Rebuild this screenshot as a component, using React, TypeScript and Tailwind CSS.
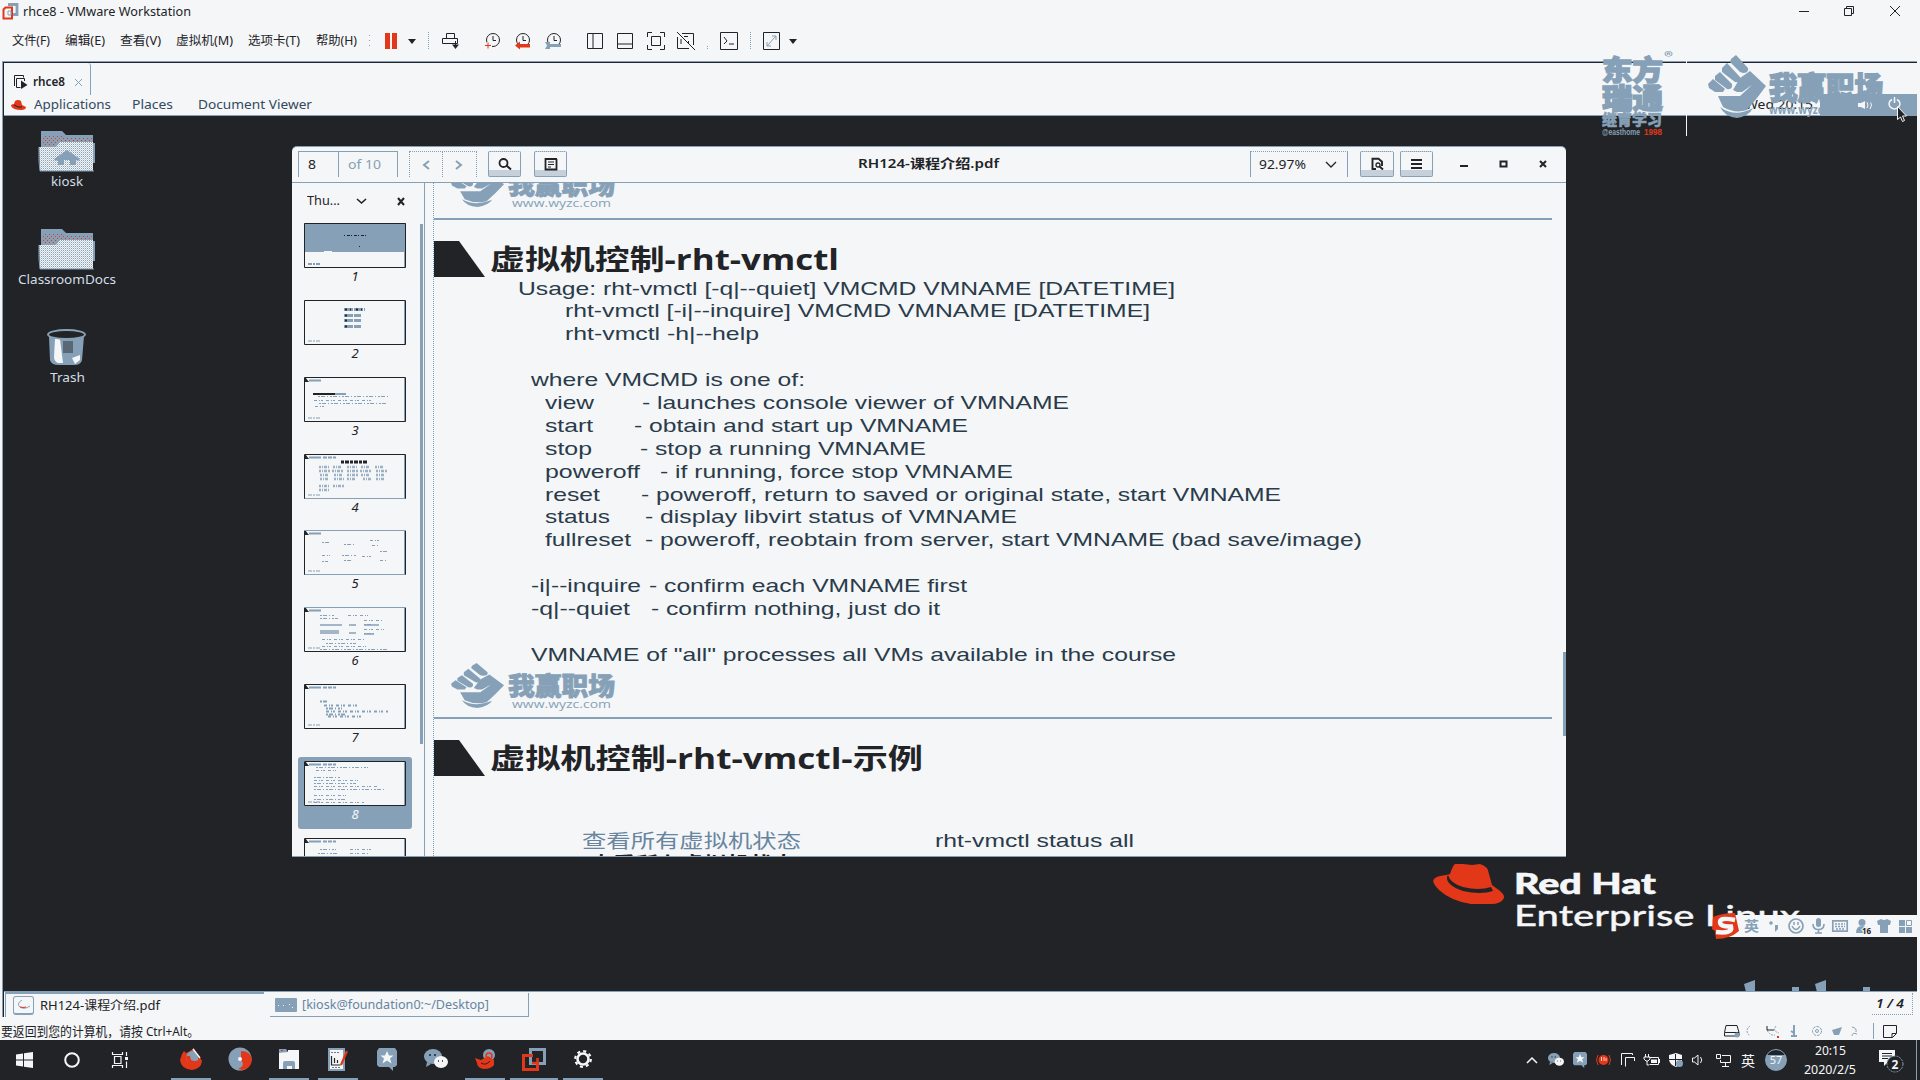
import { useLayoutEffect, useRef } from "react";
import type { ReactNode } from "react";

const INK = "#222326";
const PAPER = "#f4f6f8";
const STEEL = "#86a1b7";
const RED = "#e3371a";

/** Text stretched horizontally so that it is exactly w pixels wide. */
function Fit({ w, x = 0, className = "", children }: { w: number; x?: number; className?: string; children: ReactNode }) {
  const ref = useRef<HTMLSpanElement>(null);
  useLayoutEffect(() => {
    const el = ref.current;
    if (!el) return;
    const fit = () => {
      el.style.transform = "none";
      el.style.transform = `scaleX(${w / el.getBoundingClientRect().width})`;
    };
    fit();
    document.fonts?.ready.then(fit);
  }, [w]);
  return (
    <span className={`inline-flex shrink-0 ${className}`} style={{ width: w, marginLeft: x }}>
      <span ref={ref} className="inline-block shrink-0 origin-left whitespace-pre">
        {children}
      </span>
    </span>
  );
}

/** Icon canvas with one unit per pixel. */
function Ico({ w, h, x = 0, className = "", children }: { w: number; h: number; x?: number; className?: string; children: ReactNode }) {
  return (
    <svg width={w} height={h} viewBox={`0 0 ${w} ${h}`} fill="none" className={`block shrink-0 overflow-visible ${className}`} style={{ marginLeft: x }}>
      {children}
    </svg>
  );
}

function Fist({ w, h, x = 0, className = "" }: { w: number; h: number; x?: number; className?: string }) {
  return (
    <svg width={w} height={h} viewBox="0 0 58 63" preserveAspectRatio="none" className={`block shrink-0 ${className}`} style={{ marginLeft: x }} fill={STEEL}>
      <path d="M23 4 28 0 40 13Q41 18 35 18L32 17 22 7Z" />
      <path d="M14 13 19 8 32 22Q33 28 27 27L14 17Z" />
      <path d="M7 21 12 17 24 29Q25 35 19 34L7 25Z" />
      <path d="M0 29 5 24 17 34 15 37H7L1 33Z" />
      <path d="M32 23 42 16 58 31 49 43 39 55Q27 59 15 52L10 41H32L44 30 34 37H29L25 35Z" />
      <path d="M12 52Q27 63 45 53 41 61 29 63 17 62 12 52Z" />
    </svg>
  );
}

/* ------------------------------------------------------------ host window */

function TitleBar() {
  return (
    <header className="flex h-6 items-center pl-[2px] text-[12px] text-[#222326]">
      <Ico w={16} h={17} className="mt-[-2px]">
        <path d="M6 1.500h9v10h-4" stroke={STEEL} strokeWidth="2.800" />
        <path d="M3.500 4.500h6.500v11H1.500v-9z" stroke={RED} strokeWidth="2" />
        <path d="M6 8h3v4h-3z" stroke={STEEL} />
      </Ico>
      <Fit w={168} x={5}>rhce8 - VMware Workstation</Fit>
      <Ico w={102} h={12} x={1608} className="mt-[-3px]">
        <path d="M0 6.500h10" stroke={INK} />
        <path d="M45.500 3.500h7v7h-7zM47.500 3.500v-2h7v7h-2" stroke={INK} />
        <path d="M91 1l10 10M101 1L91 11" stroke={INK} />
      </Ico>
    </header>
  );
}

function Caret({ x }: { x: number }) {
  return (
    <Ico w={8} h={5} x={x}>
      <path d="M0 0h8L4 5z" fill={INK} />
    </Ico>
  );
}

function Clock({ x, children }: { x: number; children: ReactNode }) {
  return (
    <Ico w={17} h={18} x={x}>
      <circle cx="9" cy="8" r="6.500" stroke={INK} />
      <path d="M9 4v4.500h3" stroke={INK} />
      {children}
    </Ico>
  );
}

function Dots({ x, h = 18 }: { x: number; h?: number }) {
  return (
    <Ico w={1} h={h} x={x}>
      <path d={`M.5 0v${h}`} stroke={STEEL} strokeDasharray="1 1" />
    </Ico>
  );
}

function MenuBar() {
  return (
    <nav className="flex h-[37px] items-center pb-[3px] text-[12px] text-[#222326]">
      <Fit w={38} x={12}>文件(F)</Fit>
      <Fit w={40} x={15}>编辑(E)</Fit>
      <Fit w={41} x={15}>查看(V)</Fit>
      <Fit w={57} x={15}>虚拟机(M)</Fit>
      <Fit w={52} x={15}>选项卡(T)</Fit>
      <Fit w={41} x={16}>帮助(H)</Fit>
      <Ico w={1} h={12} x={12}><path d="M.5 0v12" stroke={STEEL} strokeDasharray="1 4" /></Ico>
      <Ico w={12} h={16} x={15}><path d="M0 0h5v16H0zM7 0h5v16H7z" fill={RED} /></Ico>
      <Caret x={11} />
      <Dots x={12} />
      <Ico w={18} h={18} x={13}>
        <path d="M4.500 1.500h8v5h-8zM.5 6.500h15v5H.500zM13.500 9v6" stroke={INK} />
        <path d="M10 12.500h7L13.500 17z" fill={INK} />
      </Ico>
      <Clock x={24}><path d="M0 14h8M4 10v8" stroke={PAPER} strokeWidth="3" /><path d="M1 13.500h6M4 10.500v6" stroke={RED} /></Clock>
      <Clock x={13}><path d="M1 13.500 6 9.500v2.500h10v3.500H6v2z" fill={RED} /></Clock>
      <Clock x={14}><path d="M0 10h5v2h11v3H5v2H0l2-3.500z" fill={STEEL} /></Clock>
      <Ico w={16} h={18} x={25}><path d="M.5 1.500h15v15H.5zM6 2v14" stroke={INK} /></Ico>
      <Ico w={16} h={18} x={14}><path d="M.5 1.500h15v15H.5zM1 12h14" stroke={INK} /></Ico>
      <Ico w={18} h={18} x={14}><path d="M.5 5V.5H5M13 .5h4.500V5M17.500 13v4.500H13M5 17.500H.500V13M4.500 4.500h9v9h-9z" stroke={INK} /></Ico>
      <Ico w={18} h={18} x={12}><path d="M5 1.500h11.500V13M12 16.500H.500V5M7 4.500h4M11.500 9v3M0 0l18 18M4 12v-5" stroke={INK} /></Ico>
      <Ico w={1} h={18} x={12}><path d="M.5 14v4" stroke={STEEL} strokeDasharray="1 1" /></Ico>
      <Ico w={18} h={18} x={12}><path d="M.5.5h17v17H.500zM4 5l3 4-3 3M9 12h5" stroke={INK} /></Ico>
      <Dots x={12} />
      <Ico w={17} h={18} x={12}>
        <path d="M.5.5h16v17H.500z" stroke={INK} />
        <path d="M4 14 13 4M9 4h4v4M4 10v4h4" stroke={STEEL} />
      </Ico>
      <Caret x={9} />
    </nav>
  );
}

function TabStrip() {
  return (
    <div className="flex h-8 items-center">
      <div className="flex h-full w-[87px] items-center border-r border-[#86a1b7] pl-[10px] pt-[6px] [border-top-right-radius:3px]">
        <Ico w={14} h={14}>
          <path d="M.5 11V.500h9v2M10.500 6V3.500h-8v9h4" stroke={INK} />
          <path d="M7 5.500 13.500 10 7 14z" fill={INK} />
        </Ico>
        <Fit w={32} x={5} className="text-[12px] font-semibold text-[#222326]">rhce8</Fit>
        <Ico w={7} h={7} x={10}><path d="M0 0l7 7M7 0L0 7" stroke={STEEL} /></Ico>
      </div>
    </div>
  );
}

/* -------------------------------------------------------- guest top panel */

function GuestPanel() {
  return (
    <div className="relative flex h-[21px] items-center border-b border-[#86a1b7] pl-[7px] text-[12.500px] text-[#33495c]">
      <Ico w={15} h={10}>
        <path d="M4 1Q7-1 10 1l1 4 4 2q0 3-5 3Q2 10 0 6q0-2 3-2z" fill={RED} />
        <path d="M3 5q4 3 8 2" stroke={INK} />
      </Ico>
      <Fit w={77} x={8}>Applications</Fit>
      <Fit w={41} x={21}>Places</Fit>
      <Fit w={114} x={25}>Document Viewer</Fit>
      <div className="ml-auto flex h-full items-center">
        <Fit w={68} className="mr-[7px] text-[13px] text-[#222326]">Wed 20:15</Fit>
        <div className="flex h-[22px] w-[97px] items-center bg-[#86a1b7] pl-[38px]">
          <Ico w={15} h={8}>
            <path d="M0 2h3l4-2v8L3 6H0z" fill={PAPER} />
            <path d="M9 1q2 3 0 6M12 0q3 4 0 8" stroke={PAPER} />
          </Ico>
          <Ico w={13} h={13} x={15} className="mt-[-3px]">
            <path d="M4 2.500a5.500 5 0 1 0 5 0M6.500 0v6" stroke={PAPER} strokeWidth="1.500" />
          </Ico>
        </div>
      </div>
    </div>
  );
}

/* ---------------------------------------------------------- desktop icons */

function Folder({ home }: { home?: boolean }) {
  return (
    <Ico w={56} h={42}>
      <defs>
        <pattern id="weave" width="2" height="2" patternUnits="userSpaceOnUse">
          <rect width="2" height="2" fill={PAPER} />
          <rect width="1" height="1" fill={STEEL} />
          <rect x="1" y="1" width="1" height="1" fill="#c4d0db" />
        </pattern>
        <pattern id="specks" width="4" height="4" patternUnits="userSpaceOnUse">
          <rect width="4" height="4" fill={STEEL} />
          <rect width="1" height="1" fill={RED} />
          <rect x="2" y="2" width="1" height="1" fill={RED} />
        </pattern>
      </defs>
      <path d="M2 1h21l4 4h27v8h2v20h-2v8H2z" fill={STEEL} />
      <path d="M4 6h20l3 2h26v4H20l-5 4H4z" fill="url(#specks)" />
      <path d="M0 17h17l4-5h33v29H1z" fill="url(#weave)" />
      <path d="M0 17v14l1 10h54" stroke={STEEL} />
      {home && (
        <path d="M15 29 28 20l13 9-2 2-2-1v5h-6v-5h-6v5h-6v-5l-3 1z" fill={STEEL} />
      )}
    </Ico>
  );
}

function TrashCan() {
  return (
    <Ico w={40} h={37}>
      <path d="M2 7h35l-2 24q-1 5-8 5H12q-8 0-9-5z" fill={STEEL} />
      <path d="M8 10h5l3 24h-5q-4-2-4-6z" fill={PAPER} />
      <path d="M25 29l8-3v5l-5 4z" fill={PAPER} />
      <path d="M16 12h10v12H16z" fill={INK} opacity=".45" />
      <ellipse cx="19.500" cy="5.500" rx="18.500" ry="4.500" fill={INK} stroke={STEEL} strokeWidth="1.800" />
    </Ico>
  );
}

function DesktopIcon({ w, label, children }: { w: number; label: string; children: ReactNode }) {
  return (
    <div className="flex h-[98px] w-[128px] flex-col items-center">
      <div className="flex h-[42px] items-start">{children}</div>
      <Fit w={w} className="text-[13px] leading-[18px] text-[#d3dde6]">{label}</Fit>
    </div>
  );
}

/* ------------------------------------------------------ document viewer */

function ToolButton({ x, w = 33, children }: { x: number; w?: number; children: ReactNode }) {
  return (
    <div
      className="flex h-[26px] shrink-0 items-center justify-center rounded-[2px] border border-[#86a1b7] bg-[linear-gradient(#f4f6f8_75%,#c5d0da_75%)] [border-top-style:dotted]"
      style={{ width: w, marginLeft: x }}
    >
      {children}
    </div>
  );
}

function Toolbar() {
  return (
    <div className="flex h-[36px] shrink-0 items-center border-b border-[#86a1b7] pb-px pl-[6px]">
      <div className="flex h-[26px] w-[100px] items-center border-x border-t border-[#86a1b7] text-[13px]">
        <Fit w={8} x={9} className="text-[#222326]">8</Fit>
        <div className="ml-[22px] h-full w-px bg-[#86a1b7]" />
        <Fit w={33} x={9} className="text-[#86a1b7]">of 10</Fit>
      </div>
      <div className="ml-[11px] flex h-[26px] w-[68px] items-center border border-b-0 border-dotted border-[#86a1b7]">
        <Ico w={7} h={10} x={13}><path d="M6 1 1 5l5 4" stroke={STEEL} strokeWidth="2" /></Ico>
        <div className="ml-[12px] h-full w-px border-l border-dotted border-[#86a1b7]" />
        <Ico w={7} h={10} x={12}><path d="M1 1l5 4-5 4" stroke={STEEL} strokeWidth="2" /></Ico>
      </div>
      <ToolButton x={11}>
        <Ico w={14} h={12}><circle cx="5.500" cy="5" r="4" stroke={INK} strokeWidth="1.800" /><path d="M8.500 7.500 13 11.500" stroke={INK} strokeWidth="2" /></Ico>
      </ToolButton>
      <ToolButton x={13}>
        <Ico w={14} h={12}><path d="M1.500 0v11.500h11V1" stroke={INK} strokeWidth="1.800" /><path d="M2 1h11" stroke={INK} strokeWidth="2" /><path d="M4 4h6M4 6.500h6M4 9h3" stroke={INK} /></Ico>
      </ToolButton>
      <Fit w={141} x={291} className="text-[13px] font-semibold text-[#222326]">RH124-课程介绍.pdf</Fit>
      <div className="ml-[251px] flex h-[26px] w-[98px] items-center border-x border-t border-[#86a1b7] [border-top-style:dotted]">
        <Fit w={47} x={8} className="text-[13px] text-[#222326]">92.97%</Fit>
        <Ico w={12} h={7} x={19}><path d="M1 1l5 5 5-5" stroke={INK} strokeWidth="1.300" /></Ico>
      </div>
      <ToolButton x={12} w={34}>
        <Ico w={13} h={12}><path d="M5 11H1.500V.700h6l3.500 3V8" stroke={INK} strokeWidth="1.900" /><circle cx="7" cy="7" r="2" stroke={INK} strokeWidth="1.300" /><path d="M8.500 8.500l3.500 3" stroke={INK} strokeWidth="2" /></Ico>
      </ToolButton>
      <ToolButton x={6}>
        <Ico w={11} h={10}><path d="M0 1h11M0 5h11M0 9h11" stroke={INK} strokeWidth="1.800" /></Ico>
      </ToolButton>
      <Ico w={88} h={10} x={27}>
        <path d="M0 7h8" stroke={INK} strokeWidth="2" />
        <path d="M40.500 2.500h6v5h-6z" stroke={INK} strokeWidth="2" />
        <path d="M80 2l6 6M86 2l-6 6" stroke={INK} strokeWidth="2" />
      </Ico>
    </div>
  );
}

type Dash = [number, number, number];

const thumbs: Dash[][] = [
  [],
  [[40, 9, 21], [40, 15, 17], [40, 20, 17], [40, 26, 17]],
  [[14, 19, 72], [10, 23, 60], [15, 26, 68], [11, 29, 12]],
  [],
  [[18, 12, 8], [66, 10, 10], [40, 14, 10], [68, 15, 6], [76, 21, 8], [18, 25, 8], [38, 25, 14], [58, 26, 12], [18, 31, 6], [76, 30, 6], [40, 30, 8]],
  [[16, 8, 14], [44, 8, 20], [16, 11, 18], [60, 13, 18], [60, 17, 8], [60, 22, 20], [60, 26, 10], [18, 32, 42], [22, 36, 30], [18, 39, 44], [16, 42, 68]],
  [[16, 17, 8], [20, 21, 36], [22, 24, 16], [22, 27, 62], [22, 30, 20], [24, 32, 34]],
  [[12, 6, 52], [12, 9, 20], [10, 16, 26], [10, 19, 44], [10, 22, 42], [10, 25, 64], [10, 28, 70], [10, 34, 32], [10, 38, 32], [10, 41, 50]],
  [[16, 11, 16], [46, 11, 24], [14, 15, 20], [46, 15, 18], [14, 19, 26]],
];

function Thumb({ page, dashes }: { page: number; dashes: Dash[] }) {
  const selected = page === 8;
  return (
    <div className="ml-[6px] flex h-[76.850px] w-[114px] shrink-0 flex-col items-center pt-[4px]">
      <div className={`flex h-[72px] w-full flex-col items-center rounded-[3px] pt-1 ${selected ? "bg-[#86a1b7]" : ""}`}>
        <Ico w={102} h={45} className="bg-[#f4f6f8]">
          {page === 1 && (
            <>
              <path d="M0 0h102v29H0z" fill={STEEL} />
              <path d="M40 12.500h22M55 23.500h1" stroke={INK} strokeDasharray="1 2 3 1" />
              <path d="M20 28.500h8" stroke={PAPER} />
            </>
          )}
          {page === 3 && <path d="M9 17h22" stroke={INK} strokeWidth="2" />}
          {page === 3 && <path d="M31 17h11" stroke={STEEL} strokeWidth="2" />}
          {page === 4 && <path d="M37 8h27" stroke={INK} strokeWidth="3" strokeDasharray="3 1 4 1" />}
          {page === 4 && (
            <path
              d="M15 13h10M29 13h9M43 13h10M57 13h8M71 13h9M15 17h11M28 17h12M43 17h11M56 17h11M72 17h11M16 21h9M30 21h8M43 21h11M57 21h8M72 21h9M16 25h9M30 25h10M43 25h9M59 25h8M72 25h9M15 32h10M29 32h12M15 36h10"
              stroke={STEEL}
              strokeWidth="2.500"
              strokeDasharray="2 1 1 1 3 1"
              opacity=".8"
            />
          )}
          {page === 6 && <path d="M16 18h22M16 24h19M45 18h7M60 18h15M16 26h19M45 26h7M60 27h10" stroke={STEEL} strokeWidth="1.500" />}
          {dashes.map(([x, y, w], i) => (
            <path key={i} d={`M${x} ${y + 0.5}h${w}`} stroke={STEEL} strokeWidth={page === 2 ? 3 : page === 7 ? 2 : 1} strokeDasharray={page === 2 ? "9 1" : i % 2 ? "3 2 1 1 2 3" : "2 1 4 2 1 2"} />
          ))}
          {page === 2 && <path d="M41 9.500h20M41 15.500h3M41 20.500h3M41 26.500h3" stroke={INK} strokeWidth="2" strokeDasharray="2 3 1 5" />}
          {page > 2 && <path d="M1 0v5h4z" fill={INK} />}
          {page > 2 && <path d="M5 3.500h12" stroke={STEEL} strokeWidth="2" />}
          {(page === 4 || page > 6) && <path d="M19 3.500h13" stroke={STEEL} strokeWidth="2" strokeDasharray="4 1" />}
          <path d="M4 41h12" stroke={STEEL} strokeWidth={page === 1 ? 2 : 1} strokeDasharray="4 1 2 1" />
          <path d="M.5.5h101v44H.5z" stroke={INK} />
          <path d="M100.500 1v43" stroke={STEEL} />
          {(page === 5 || page === 6) && <path d="M0 .5h102" stroke={STEEL} />}
          {(page === 4 || page === 5) && <path d="M1 44.500h100" stroke={STEEL} />}
        </Ico>
        {page < 9 && (
          <span className={`text-[13px] italic leading-[16px] ${selected ? "text-[#f4f6f8]" : "text-[#222326]"}`}>{page}</span>
        )}
      </div>
    </div>
  );
}

function Sidebar() {
  return (
    <aside className="flex w-[128px] shrink-0 flex-col overflow-hidden">
      <div className="flex h-[36px] shrink-0 items-center">
        <Fit w={33} x={15} className="text-[13px] text-[#222326]">Thu...</Fit>
        <Ico w={11} h={6} x={16}><path d="M1 1l4.500 4L10 1" stroke={INK} strokeWidth="1.600" /></Ico>
        <Ico w={8} h={7} x={30}><path d="M1 0l6 7M7 0L1 7" stroke={INK} strokeWidth="2" /></Ico>
      </div>
      <div className="mt-[-4px] flex min-h-0 grow flex-col overflow-hidden">
        {thumbs.map((d, i) => (
          <Thumb key={i} page={i + 1} dashes={d} />
        ))}
      </div>
    </aside>
  );
}

const VMCTL: [number, number, string, number, number, string][] = [
  [518, 657, "Usage: rht-vmctl [-q|--quiet] VMCMD VMNAME [DATETIME]", 0, 0, ""],
  [565, 585, "rht-vmctl [-i|--inquire] VMCMD VMNAME [DATETIME]", 0, 0, ""],
  [565, 194, "rht-vmctl -h|--help", 0, 0, ""],
  [0, 0, "", 0, 0, ""],
  [531, 274, "where VMCMD is one of:", 0, 0, ""],
  [545, 49, "view", 642, 427, "- launches console viewer of VMNAME"],
  [545, 48, "start", 634, 334, "- obtain and start up VMNAME"],
  [545, 47, "stop", 640, 286, "- stop a running VMNAME"],
  [545, 95, "poweroff", 660, 353, "- if running, force stop VMNAME"],
  [545, 55, "reset", 641, 640, "- poweroff, return to saved or original state, start VMNAME"],
  [545, 65, "status", 645, 372, "- display libvirt status of VMNAME"],
  [545, 86, "fullreset", 645, 717, "- poweroff, reobtain from server, start VMNAME (bad save/image)"],
  [0, 0, "", 0, 0, ""],
  [531, 110, "-i|--inquire", 649, 318, "- confirm each VMNAME first"],
  [531, 99, "-q|--quiet", 651, 289, "- confirm nothing, just do it"],
  [0, 0, "", 0, 0, ""],
  [531, 645, 'VMNAME of "all" processes all VMs available in the course', 0, 0, ""],
];

function SlideTitle({ w, children }: { w: number; children: ReactNode }) {
  return (
    <div className="flex h-[36px] items-center">
      <Ico w={51} h={36}><path d="M0 0h25l26 36H0z" fill={INK} /></Ico>
      <Fit w={w} x={5} className="text-[28px] font-bold leading-[36px] text-[#222326]">{children}</Fit>
    </div>
  );
}

function WyzcLogo() {
  return (
    <div className="flex">
      <Fist w={53} h={45} />
      <div className="ml-[4px] mt-[10px] flex flex-col">
        <Fit w={107} className="text-[25px] font-black leading-[25px] text-[#86a1b7] [-webkit-text-stroke:0.800px_#86a1b7]">我赢职场</Fit>
        <Fit w={99} x={4} className="text-[11px] leading-[11px] text-[#86a1b7]">www.wyzc.com</Fit>
      </div>
    </div>
  );
}

function Slides() {
  return (
    <main className="flex min-w-0 grow flex-col overflow-hidden border-l border-dotted border-[#86a1b7] [font-family:'Open_Sans','Noto_Sans_CJK_SC',sans-serif]">
      <section className="mr-[14px] flex h-[37px] shrink-0 flex-col justify-end border-b-2 border-[#86a1b7] pb-[10px] pl-[17px]">
        <WyzcLogo />
      </section>
      <section className="mr-[14px] mt-[21px] flex h-[478px] shrink-0 flex-col border-b-2 border-[#86a1b7]">
        <SlideTitle w={349}>虚拟机控制-rht-vmctl</SlideTitle>
        <div className="mt-[0.500px] flex h-[390px] shrink-0 flex-col font-['Liberation_Sans'] text-[18.500px] leading-[22.900px] text-[#2a3b4a]">
          {VMCTL.map(([x, w, a, x2, w2, b], i) => (
            <div key={i} className="flex h-[22.900px] shrink-0 items-center">
              {a && <Fit w={w} x={x - 434}>{a}</Fit>}
              {b && <Fit w={w2} x={x2 - x - w}>{b}</Fit>}
            </div>
          ))}
        </div>
        <div className="mt-[-5px] pl-[17px]"><WyzcLogo /></div>
      </section>
      <section className="mt-[21px] flex shrink-0 flex-col">
        <SlideTitle w={433}>虚拟机控制-rht-vmctl-示例</SlideTitle>
        <div className="mt-[53px] flex h-[24px] items-center">
          <Fit w={219} x={148} className="text-[19px] font-normal leading-[24px] text-[#6885a0]">查看所有虚拟机状态</Fit>
          <Fit w={199} x={134} className="font-['Liberation_Sans'] text-[18.500px] text-[#2a3b4a]">rht-vmctl status all</Fit>
        </div>
        <Fit w={205} x={156} className="text-[19px] font-bold leading-[22px] text-[#222326]">查看所有虚拟机状态</Fit>
      </section>
    </main>
  );
}

function DocumentViewer() {
  return (
    <div className="absolute left-[292px] top-[30px] flex h-[711px] w-[1274px] flex-col overflow-hidden rounded-t-[5px] border-b border-t border-[#86a1b7] bg-[#f4f6f8]">
      <Toolbar />
      <div className="flex min-h-0 grow">
        <Sidebar />
        <div className="mt-[41px] h-[520px] w-[3px] shrink-0 bg-[#86a1b7]" />
        <div className="ml-px mr-[8px] w-px shrink-0 bg-[#86a1b7]" />
        <Slides />
      </div>
      <div className="absolute bottom-[120px] right-0 h-[84px] w-[3px] bg-[#86a1b7]" />
    </div>
  );
}

/* ------------------------------------------------------- desktop overlays */

function RedHat() {
  return (
    <div className="absolute left-[1433px] top-[747px] flex">
      <Ico w={71} h={41}>
        <path d="M22 1h8l9 1 8-1q8 2 9 10l3 11 4 3q9 6 8 10-3 6-13 6H38Q18 38 6 27-2 19 1 16q2-3 12-4l4-1q3-9 5-10z" fill={RED} />
        <path d="M15 12q2 8 15 12 16 4 28 0l2 4q-12 4-30 0-17-6-16-14z" fill={INK} />
      </Ico>
      <div className="ml-[10px] mt-[4px] flex flex-col [font-family:Lato,'Open_Sans',sans-serif] text-[#f4f6f8]">
        <Fit w={142} className="text-[29px] font-black leading-[32px] [-webkit-text-stroke:0.600px_#f4f6f8]">Red Hat</Fit>
        <Fit w={286} className="text-[29px] font-medium leading-[31px] [-webkit-text-stroke:0.300px_#f4f6f8]">Enterprise Linux</Fit>
      </div>
    </div>
  );
}

function ImeBar() {
  return (
    <div className="absolute left-[1712px] top-[799px] flex h-[22px] w-[206px] items-center">
      <div className="ml-[14px] h-full w-[192px] shrink-0 bg-[#f4f6f8]" />
      <Ico w={27} h={27} x={-206}>
        <path d="M1 4Q10 0 23 0l4 18q-9 8-23 8L3 18 0 16z" fill={RED} />
        <path d="M23 7Q8 4 8 9t11 4.500Q21 21 4 19" stroke={PAPER} strokeWidth="4.500" />
      </Ico>
      <Fit w={15} x={5} className="text-[14px] font-bold leading-[18px] text-[#86a1b7]">英</Fit>
      <Ico w={10} h={12} x={10}><circle cx="2" cy="3" r="1.800" fill={STEEL} /><path d="M6 5h3v4l-3 3z" fill={STEEL} /></Ico>
      <Ico w={16} h={16} x={9}><circle cx="8" cy="8" r="7" stroke={STEEL} strokeWidth="1.700" /><path d="M4 8q4 7 8 0M6 4v3M10 4v3" stroke={STEEL} strokeWidth="1.500" /></Ico>
      <Ico w={13} h={16} x={8}><rect x="4" y="0" width="5" height="9" rx="2.500" fill={STEEL} /><path d="M1 6q0 5.500 5.500 5.500T12 6M6.500 12v3M3 15h7" stroke={STEEL} strokeWidth="1.600" /></Ico>
      <Ico w={16} h={12} x={7}><path d="M.8.8h14.400v10.400H.8z" stroke={STEEL} strokeWidth="1.700" /><path d="M3 4h10M3 6.500h10M4 9h8" stroke={STEEL} strokeWidth="1.500" strokeDasharray="2 1" /></Ico>
      <Ico w={16} h={15} x={8}><circle cx="6" cy="3.500" r="3.500" fill={STEEL} /><path d="M0 14q0-7 6-7t6 7z" fill={STEEL} /><text x="6" y="15" fontSize="8" fontWeight="700" fill={INK} stroke={PAPER} strokeWidth="2" paintOrder="stroke">16</text></Ico>
      <Ico w={14} h={14} x={5}><path d="M0 2 4 0q3 2 6 0l4 2-1 4h-2v8H3V6H1z" fill={STEEL} /></Ico>
      <Ico w={13} h={13} x={8}><path d="M0 0h6v6H0zM0 7h6v6H0zM7 7h6v6H7z" fill={STEEL} /><path d="M7.500.500h5v5h-5z" stroke={STEEL} /></Ico>
    </div>
  );
}

/** Broadcast watermarks that lie over the top right corner of the screen. */
function Watermarks() {
  return (
    <div className="pointer-events-none absolute left-[1602px] top-[51px] flex items-start font-['Noto_Sans_CJK_SC'] text-[#86a1b7]">
      <div className="mt-[4px] flex w-[60px] flex-col">
        <Fit w={61} className="text-[28px] font-black leading-[28px] [-webkit-text-stroke:1.500px_#86a1b7]">东方</Fit>
        <Fit w={61} className="text-[28px] font-black leading-[28px] [-webkit-text-stroke:1.500px_#86a1b7]">瑞通</Fit>
        <Fit w={60} className="text-[15px] font-black leading-[16px] [-webkit-text-stroke:0.500px_#86a1b7]">继育学习</Fit>
        <div className="flex font-['Liberation_Sans'] text-[9px] font-bold leading-[10px]">
          <Fit w={38}>@easthome</Fit>
          <Fit w={18} x={4} className="text-[#e3371a]">1998</Fit>
        </div>
      </div>
      <Fit w={9} x={2} className="text-[11px] font-bold leading-[10px]">®</Fit>
      <div className="ml-[13px] mt-[10px] h-[75px] w-px bg-[#f4f6f8]" />
      <Fist w={58} h={63} x={21} className="mt-[4px]" />
      <div className="ml-[3px] mt-[18px] flex flex-col">
        <Fit w={114} className="text-[31px] font-black leading-[33px] [-webkit-text-stroke:1.500px_#86a1b7]">我赢职场</Fit>
        <Fit w={54} className="font-['Open_Sans'] text-[13px] font-bold leading-[14px]">www.wyzc</Fit>
      </div>
    </div>
  );
}

function Cursor() {
  return (
    <svg width="12" height="17" viewBox="0 0 12 17" className="absolute left-[1897px] top-[106px]">
      <path d="M.5.5v13l3-2.500 2 4.500 2-1-2-4.500h4z" fill={INK} stroke={PAPER} />
    </svg>
  );
}

/* ------------------------------------------------------------ guest panel */

function GuestTaskbar() {
  return (
    <div className="relative flex h-[26px] items-start border-t border-[#86a1b7] pl-px text-[12px]">
      <div className="flex h-[25px] w-[259px] items-center border-l border-t-2 border-[#86a1b7] bg-[radial-gradient(#86a1b7_0.500px,transparent_0.600px)] bg-[length:4px_4px]">
        <div className="ml-[7px] flex h-[19px] w-[21px] items-center justify-center rounded-[3px] border border-b-2 border-[#86a1b7] bg-[#f4f6f8]">
          <Ico w={14} h={10}><path d="M5 0Q-1 4 3 7t10-1" stroke={STEEL} /><path d="M3 7q3 1 6 0" stroke={RED} /></Ico>
        </div>
        <Fit w={120} x={6} className="text-[#222326]">RH124-课程介绍.pdf</Fit>
      </div>
      <div className="ml-[6px] mt-px flex h-[24px] w-[259px] items-center border-b border-r border-[#86a1b7]">
        <Ico w={22} h={14} x={5}><rect width="22" height="14" rx="1" fill={STEEL} /><path d="M3 7.500h1M8 7.500h1M14 6.500h1M17 9.500h1" stroke={PAPER} /></Ico>
        <Fit w={187} x={5} className="text-[#6885a0]">[kiosk@foundation0:~/Desktop]</Fit>
      </div>
      <div className="ml-auto mr-[4px] mt-px flex h-[22px] w-[41px] items-center border-b border-r border-dotted border-[#86a1b7]">
        <Fit w={28} x={4} className="font-semibold italic text-[#222326]">1 / 4</Fit>
      </div>
      <svg width="130" height="12" viewBox="0 0 130 12" className="absolute left-[1740px] top-[-12px]" fill={STEEL}>
        <path d="M0 4 11 0v12H2zM71 4 82 0v12H73zM48 7h7v5h-7zM119 7h7v5h-7z" />
      </svg>
    </div>
  );
}

function StatusBar() {
  return (
    <div className="flex h-[23px] items-center pt-[4px]">
      <Fit w={198} x={1} className="text-[13px] leading-[18px] text-[#222326]">要返回到您的计算机，请按 Ctrl+Alt。</Fit>
      <Ico w={175} h={16} x={1525}>
        <path d="M2 2.500h11l2 7v3.500H.500v-3.500zM1 9.500h14" stroke={INK} />
        <circle cx="13" cy="12" r="2.500" fill={STEEL} />
        <path d="M26 3q-6 5 0 10" stroke={STEEL} strokeDasharray="2 1" />
        <path d="M43 7q3 6 8 5M52 3q-4 5 3 7" stroke={STEEL} strokeDasharray="2 1" />
        <path d="M43 3v4h7" stroke={INK} />
        <path d="M53 14h2" stroke={RED} strokeWidth="2" />
        <path d="M70 2v11M67 8l3 2M67 13h6" stroke={STEEL} strokeWidth="2" />
        <circle cx="93" cy="8" r="4.500" stroke={STEEL} strokeDasharray="3 1" /><circle cx="93" cy="8" r="1.500" stroke={STEEL} />
        <path d="M108 7l10-3-3 8h-5z" fill={STEEL} />
        <path d="M128 4q5 1 4 5M128 13q0-4 5-2" stroke={STEEL} />
        <path d="M149.500 0v16" stroke={STEEL} />
        <path d="M159.500 2.500h13v8l-4 4h-9zM172 10.500h-4v4" stroke={INK} />
      </Ico>
    </div>
  );
}

/* ------------------------------------------------------- Windows taskbar */

function WeChat({ w, x = 0 }: { w: number; x?: number }) {
  return (
    <svg width={w} height={(w * 20) / 24} viewBox="0 0 24 20" className="block shrink-0" style={{ marginLeft: x }}>
      <ellipse cx="9" cy="7.500" rx="9" ry="7.500" fill={STEEL} />
      <path d="M3 13l-1 5 5-3z" fill={STEEL} />
      <ellipse cx="17" cy="13" rx="7" ry="6" fill={PAPER} />
      <path d="M5 6h2M10 6h2M14 12h1M18 12h1" stroke={INK} strokeWidth="1.500" />
    </svg>
  );
}

function StarBubble({ w, x = 0 }: { w: number; x?: number }) {
  return (
    <svg width={w} height={(w * 23) / 20} viewBox="0 0 20 23" className="block shrink-0" style={{ marginLeft: x }}>
      <path d="M2 0h16l2 3v14l-2 2h-2v4l-4-4H2l-2-2V3z" fill={STEEL} />
      <path d="M10 3l2 4.500h4.500L13 10.500l1.500 5L10 12.500l-4.500 3 1.500-5L3.500 7.500H8z" fill={PAPER} />
    </svg>
  );
}

function AppSlot({ w = 40, x, running, hot, children }: { w?: number; x: number; running?: boolean; hot?: boolean; children: ReactNode }) {
  return (
    <div
      className={`flex h-10 shrink-0 items-center justify-center border-b-2 ${running ? "border-[#86a1b7]" : "border-transparent"} ${hot ? "bg-[radial-gradient(#86a1b7_0.500px,transparent_0.600px)] bg-[length:8px_8px]" : ""}`}
      style={{ width: w, marginLeft: x }}
    >
      {children}
    </div>
  );
}

function Taskbar() {
  return (
    <footer className="flex h-10 items-center bg-[#222326]">
      <Ico w={17} h={16} x={16}><path d="M0 2.500 7 1.500v6H0zM8 1.300 17 0v7.500H8zM0 8.500h7v6l-7-1zM8 8.500h9V16l-9-1.300z" fill={PAPER} /></Ico>
      <Ico w={16} h={16} x={31}><circle cx="8" cy="8" r="6.800" stroke={PAPER} strokeWidth="2" /></Ico>
      <Ico w={16} h={16} x={32}><path d="M.5 0v2.500h10V0M2.500 4.500h6.500v7H2.500zM.5 16v-2.500h10V16M14.500 0v4M14.500 9.500V16" stroke={PAPER} strokeWidth="1.200" /><path d="M13 5h3v3h-3z" fill={PAPER} /></Ico>
      <AppSlot x={43} running>
        <Ico w={22} h={22}>
          <path d="M2 6 4 3l2 2 4-2 4-3 1 5 4 3 3 5q-1 8-10 9Q1 21 0 12z" fill={RED} />
          <path d="M7 6q4-4 7-3l4 6q1 6-6 7-6-1-6-6z" fill={STEEL} /><path d="M13 1l7 9" stroke={PAPER} strokeWidth="1.500" />
          <path d="M6 9q1-2 4-1l1 4q4 2 7 0-1 5-6 5-6-2-6-8z" fill={RED} />
        </Ico>
      </AppSlot>
      <AppSlot x={9}>
        <Ico w={24} h={24}>
          <circle cx="12" cy="12" r="11.500" fill={STEEL} />
          <path d="M13 4q10 0 11 9-1 8-9 10l-5-1q8-3 3-9z" fill={RED} /><circle cx="12" cy="12" r="2" fill={PAPER} />
        </Ico>
      </AppSlot>
      <AppSlot x={9} running>
        <Ico w={21} h={20}>
          <path d="M0 3h9V1h11v19H0z" fill={PAPER} /><path d="M0 4V0h7l2 3z" fill={STEEL} /><path d="M4 20v-6q0-2 2-2h8q2 0 2 2v6h-3v-3H8v3z" fill={STEEL} />
          <path d="M2 1.500h2" stroke={RED} />
        </Ico>
      </AppSlot>
      <AppSlot x={9} running>
        <Ico w={21} h={23}>
          <path d="M1 1h15v21H1z" fill={PAPER} stroke={STEEL} strokeWidth="2" />
          <path d="M3.500 8v9h9M6.500 15v-5M9.500 15v-3" stroke={INK} strokeWidth="1.200" /><path d="M3 4.500h9M4 19.500h9" stroke={INK} strokeDasharray="2 1" opacity=".6" /><path d="M19 3 13 17" stroke={RED} strokeWidth="2.200" />
        </Ico>
      </AppSlot>
      <AppSlot x={9}><StarBubble w={20} /></AppSlot>
      <AppSlot x={9}><WeChat w={24} /></AppSlot>
      <AppSlot x={9} running>
        <Ico w={21} h={20}>
          <circle cx="14" cy="6" r="6" fill={STEEL} />
          <path d="M0 9l6 2 7-4 6 4v5q-3 4-10 4Q2 19 2 14z" fill={RED} />
          <circle cx="14" cy="7" r="3" stroke={RED} strokeWidth="1.500" /><path d="M6 14q5 3 9-2" stroke={INK} />
        </Ico>
      </AppSlot>
      <AppSlot x={5} w={48} running hot>
        <Ico w={24} h={23}>
          <path d="M8.500 1.500h14v14h-14z" stroke={STEEL} strokeWidth="3" />
          <path d="M11 7.500H1.500v14h14V14" stroke={RED} strokeWidth="3" /><path d="M15.500 10v5H10" stroke={RED} strokeWidth="2.500" />
        </Ico>
      </AppSlot>
      <AppSlot x={5} running>
        <Ico w={18} h={18}>
          <circle cx="9" cy="9" r="5.500" stroke={PAPER} strokeWidth="2.600" />
          <circle cx="9" cy="9" r="7.800" stroke={PAPER} strokeWidth="2.200" strokeDasharray="3.060" />
        </Ico>
      </AppSlot>
      <div className="mr-[3px] flex h-full grow items-center border-r border-[#86a1b7]">
        <Ico w={12} h={7} x={923}><path d="M1 6l5-5 5 5" stroke={PAPER} strokeWidth="1.500" /></Ico>
        <WeChat w={16} x={10} />
        <StarBubble w={14} x={9} />
        <Ico w={15} h={12} x={9}><circle cx="7.500" cy="6" r="5" fill={RED} /><path d="M2 1Q-1 6 2 11M13 1q3 5 0 10" stroke={RED} /><path d="M5.500 3v4M8 3v4M10 4v3" stroke={PAPER} strokeWidth=".8" /></Ico>
        <Ico w={14} h={14} x={10}><path d="M.5 12V.5h11V2M4.500 13.500v-9h9V8" stroke={PAPER} /></Ico>
        <Ico w={16} h={12} x={9}><path d="M5.500 3.500h9v7H5.500M15.500 5v4" stroke={PAPER} /><path d="M7 5.500h6v3.500H7z" fill={PAPER} /><path d="M1.500 0v3M4.500 0v3M0 3h6v2L4 7H2L0 5zM3 7v4h2" stroke={PAPER} /></Ico>
        <Ico w={14} h={14} x={9}><path d="M0 2 7 0l6 2v5q-1 5-6 7Q1 12 0 7z" fill={PAPER} /><path d="M6.500 1v12M0 6.500h13" stroke={INK} /><circle cx="10.500" cy="10.500" r="3.500" fill={STEEL} /></Ico>
        <Ico w={11} h={12} x={9}><path d="M.5 4v4h2L6 11V1L2.500 4zM8.500 3q2.500 3 0 6" stroke={PAPER} /></Ico>
        <Ico w={15} h={13} x={13}><path d="M6 1.500h8.500v7H4.500V6M9.500 9v3.500M6 12.500h7M.5.500h4v4h-4z" stroke={PAPER} /></Ico>
        <Fit w={14} x={10} className="text-[14px] text-[#f4f6f8]">英</Fit>
        <div className="ml-[10px] flex h-[22px] w-[22px] items-center justify-center rounded-full border border-[#86a1b7] bg-[linear-gradient(#222326_25%,#86a1b7_25%)] text-[11px] text-[#f4f6f8]">57</div>
        <div className="ml-[17px] flex w-[52px] flex-col items-center text-[12px] leading-[19px] text-[#f4f6f8]">
          <Fit w={31}>20:15</Fit>
          <Fit w={52}>2020/2/5</Fit>
        </div>
        <Ico w={25} h={24} x={23}>
          <path d="M0 2h16v12H9l-4 4v-4H0z" fill={PAPER} /><path d="M3 5.500h10M3 8h10M3 10.500h6" stroke={INK} />
          <circle cx="16" cy="16" r="8" fill={INK} stroke={STEEL} strokeDasharray="2 1" />
          <text x="12.500" y="20.500" fontSize="12" fontWeight="700" fill={PAPER}>2</text>
        </Ico>
      </div>
    </footer>
  );
}

export default function App() {
  return (
    <div className="relative flex h-[1080px] w-[1920px] flex-col overflow-hidden bg-[#f4f6f8] [font-family:'Noto_Sans','Noto_Sans_CJK_SC',sans-serif]">
      <TitleBar />
      <MenuBar />
      <div className="ml-[2px] mr-[3px] flex h-[956px] flex-col border-l border-t border-[#86a1b7]">
        <div className="flex grow flex-col border-l border-t border-[#222326]">
          <TabStrip />
          <GuestPanel />
          <div className="h-[875px] shrink-0 bg-[#222326]" />
          <GuestTaskbar />
        </div>
      </div>
      <div className="absolute left-0 top-[116px] h-[875px] w-[1917px]">
        <div className="absolute left-[3px] top-[14px] flex flex-col">
          <DesktopIcon w={32} label="kiosk"><Folder home /></DesktopIcon>
          <DesktopIcon w={98} label="ClassroomDocs"><Folder /></DesktopIcon>
          <DesktopIcon w={35} label="Trash"><div className="mt-[3px]"><TrashCan /></div></DesktopIcon>
        </div>
        <RedHat />
        <DocumentViewer />
        <ImeBar />
      </div>
      <StatusBar />
      <Taskbar />
      <Watermarks />
      <Cursor />
    </div>
  );
}
